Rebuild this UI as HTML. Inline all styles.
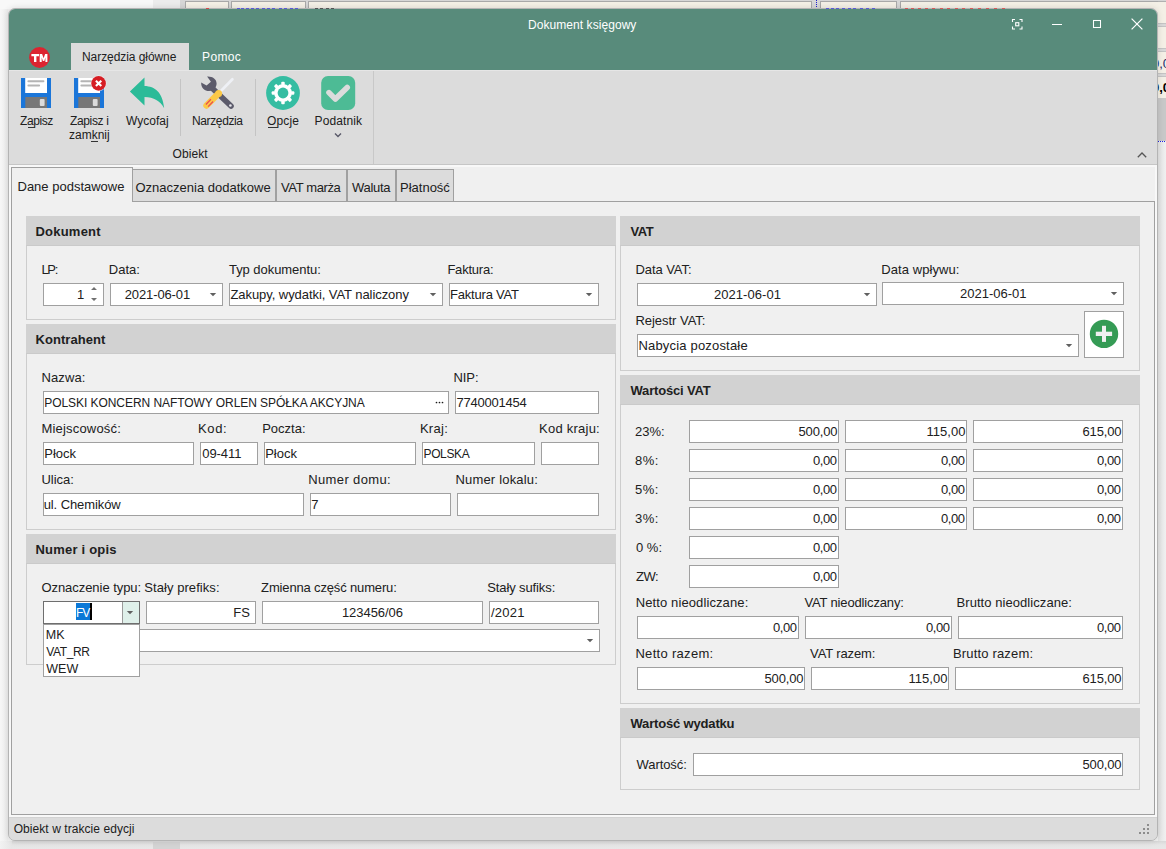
<!DOCTYPE html>
<html><head><meta charset="utf-8"><title>Dokument księgowy</title>
<style>
html,body{margin:0;padding:0;width:1166px;height:849px;overflow:hidden;background:#f0f0f0}
.b{position:absolute;box-sizing:border-box}
.t{position:absolute;font-family:"Liberation Sans", sans-serif;line-height:16px;white-space:nowrap;color:#202020}
</style></head><body>
<div class="b" style="left:0;top:0;width:1166px;height:849px;background:linear-gradient(90deg,#f7f7f7 0,#ececec 8px,#f0f0f0 8px)"></div>
<div class="b" style="left:0px;top:0px;width:153px;height:9px;background:#f8f8f8;"></div>
<div class="b" style="left:153px;top:0px;width:27px;height:9px;background:#ececec;"></div>
<div class="b" style="left:180px;top:0px;width:987px;height:9px;background:#d6d6d6;"></div>
<div class="b" style="left:185px;top:1px;width:44px;height:12px;background:#f4f0e6;border-left:1px solid #a8a8a8;border-top:1px solid #a8a8a8;border-right:1px solid #a8a8a8;"></div>
<div class="b" style="left:231px;top:1px;width:75px;height:12px;background:#f4f0e6;border-left:1px solid #a8a8a8;border-top:1px solid #a8a8a8;border-right:1px solid #a8a8a8;"></div>
<div class="b" style="left:308px;top:1px;width:504px;height:12px;background:#f4f0e6;border-left:1px solid #a8a8a8;border-top:1px solid #a8a8a8;border-right:1px solid #a8a8a8;"></div>
<div class="b" style="left:820px;top:1px;width:77px;height:12px;background:#f4f0e6;border-left:1px solid #a8a8a8;border-top:1px solid #a8a8a8;border-right:1px solid #a8a8a8;"></div>
<div class="b" style="left:900px;top:1px;width:271px;height:12px;background:#f4f0e6;border-left:1px solid #a8a8a8;border-top:1px solid #a8a8a8;border-right:1px solid #a8a8a8;"></div>
<div class="b" style="left:816px;top:0;width:1px;height:9px;border-left:1px dotted #2020d0"></div>
<div class="b" style="left:1158px;top:0px;width:9px;height:1px;background:#d6d6d6;"></div>
<div class="b" style="left:1158px;top:1px;width:9px;height:1px;background:#b0b0b0;"></div>
<div class="b" style="left:1158px;top:2px;width:9px;height:21px;background:#f4f0e6;"></div>
<div class="b" style="left:1158px;top:23px;width:9px;height:4px;background:#c4c4c4;"></div>
<div class="b" style="left:1158px;top:24px;width:9px;height:2px;background:#d8d8d8;"></div>
<div class="b" style="left:1158px;top:27px;width:9px;height:21px;background:#f4f0e6;"></div>
<div class="b" style="left:1158px;top:48px;width:9px;height:4px;background:#c4c4c4;"></div>
<div class="b" style="left:1158px;top:49px;width:9px;height:2px;background:#d8d8d8;"></div>
<div class="b" style="left:1158px;top:52px;width:9px;height:21px;background:#f4f0e6;"></div>
<div class="b" style="left:1158px;top:73px;width:9px;height:4px;background:#c4c4c4;"></div>
<div class="b" style="left:1158px;top:74px;width:9px;height:2px;background:#d8d8d8;"></div>
<div class="b" style="left:1158px;top:77px;width:9px;height:21px;background:#f4f0e6;"></div>
<div class="b" style="left:1158px;top:98px;width:9px;height:43px;background:#c8c8c8;"></div>
<div class="b" style="left:1158px;top:141px;width:9px;height:0;border-top:1px dotted #2020e0"></div>
<div class="b" style="left:1158px;top:142px;width:9px;height:707px;background:linear-gradient(90deg,#e2e2e2,#f2f2f2)"></div>
<div class="t" style="left:1152.00px;top:56px;font-size:13px;color:#1a2a6a;">0,0</div>
<div class="t" style="left:1152.00px;top:80px;font-size:13px;font-weight:bold;color:#000;">0,0</div>
<div class="b" style="left:0;top:841px;width:1166px;height:8px;background:linear-gradient(180deg,#d8d8d8,#e6e6e6 4px,#e8e8e8)"></div>
<div class="b" style="left:0;top:841px;width:12px;height:8px;background:linear-gradient(90deg,#f2f2f2,#e6e6e6)"></div>
<div class="b" style="left:153px;top:842px;width:27px;height:7px;background:#d4d4d4"></div>
<div class="b" style="left:8px;top:8px;width:1150px;height:833px;border:1px solid #b4b4b4;border-radius:7px;background:#dcdcdc;box-shadow:0 0 6px rgba(0,0,0,0.12)"></div>
<div class="b" style="left:206px;top:8px;width:3px;height:1px;background:#d84a4a;"></div>
<div class="b" style="left:237px;top:8px;width:3px;height:1px;background:#5a5ad8;"></div>
<div class="b" style="left:241px;top:8px;width:3px;height:1px;background:#5a5ad8;"></div>
<div class="b" style="left:246px;top:8px;width:3px;height:1px;background:#5a5ad8;"></div>
<div class="b" style="left:251px;top:8px;width:3px;height:1px;background:#5a5ad8;"></div>
<div class="b" style="left:256px;top:8px;width:3px;height:1px;background:#5a5ad8;"></div>
<div class="b" style="left:262px;top:8px;width:3px;height:1px;background:#5a5ad8;"></div>
<div class="b" style="left:267px;top:8px;width:3px;height:1px;background:#5a5ad8;"></div>
<div class="b" style="left:272px;top:8px;width:3px;height:1px;background:#5a5ad8;"></div>
<div class="b" style="left:279px;top:8px;width:3px;height:1px;background:#5a5ad8;"></div>
<div class="b" style="left:284px;top:8px;width:3px;height:1px;background:#5a5ad8;"></div>
<div class="b" style="left:290px;top:8px;width:3px;height:1px;background:#5a5ad8;"></div>
<div class="b" style="left:295px;top:8px;width:3px;height:1px;background:#5a5ad8;"></div>
<div class="b" style="left:315px;top:8px;width:3px;height:1px;background:#555555;"></div>
<div class="b" style="left:320px;top:8px;width:3px;height:1px;background:#555555;"></div>
<div class="b" style="left:326px;top:8px;width:3px;height:1px;background:#555555;"></div>
<div class="b" style="left:331px;top:8px;width:3px;height:1px;background:#555555;"></div>
<div class="b" style="left:826px;top:8px;width:3px;height:1px;background:#5a5ad8;"></div>
<div class="b" style="left:831px;top:8px;width:3px;height:1px;background:#5a5ad8;"></div>
<div class="b" style="left:836px;top:8px;width:3px;height:1px;background:#5a5ad8;"></div>
<div class="b" style="left:842px;top:8px;width:3px;height:1px;background:#5a5ad8;"></div>
<div class="b" style="left:848px;top:8px;width:3px;height:1px;background:#5a5ad8;"></div>
<div class="b" style="left:853px;top:8px;width:3px;height:1px;background:#5a5ad8;"></div>
<div class="b" style="left:860px;top:8px;width:3px;height:1px;background:#5a5ad8;"></div>
<div class="b" style="left:866px;top:8px;width:3px;height:1px;background:#5a5ad8;"></div>
<div class="b" style="left:872px;top:8px;width:3px;height:1px;background:#5a5ad8;"></div>
<div class="b" style="left:905px;top:8px;width:3px;height:1px;background:#d85a5a;"></div>
<div class="b" style="left:911px;top:8px;width:3px;height:1px;background:#d85a5a;"></div>
<div class="b" style="left:918px;top:8px;width:3px;height:1px;background:#d85a5a;"></div>
<div class="b" style="left:925px;top:8px;width:3px;height:1px;background:#d85a5a;"></div>
<div class="b" style="left:932px;top:8px;width:3px;height:1px;background:#d85a5a;"></div>
<div class="b" style="left:940px;top:8px;width:3px;height:1px;background:#d85a5a;"></div>
<div class="b" style="left:947px;top:8px;width:3px;height:1px;background:#d85a5a;"></div>
<div class="b" style="left:955px;top:8px;width:3px;height:1px;background:#d85a5a;"></div>
<div class="b" style="left:962px;top:8px;width:3px;height:1px;background:#d85a5a;"></div>
<div class="b" style="left:970px;top:8px;width:3px;height:1px;background:#d85a5a;"></div>
<div class="b" style="left:978px;top:8px;width:3px;height:1px;background:#d85a5a;"></div>
<div class="b" style="left:986px;top:8px;width:3px;height:1px;background:#d85a5a;"></div>
<div class="b" style="left:994px;top:8px;width:3px;height:1px;background:#d85a5a;"></div>
<div class="b" style="left:1002px;top:8px;width:3px;height:1px;background:#d85a5a;"></div>
<div class="b" style="left:9px;top:9px;width:1148px;height:61px;background:#588b7b;border-radius:6px 6px 0 0"></div>
<div class="t" style="left:528.00px;top:17px;font-size:12px;color:#ffffff;letter-spacing:0.062px;">Dokument księgowy</div>
<svg class="b" style="left:1011px;top:18px" width="12" height="12" viewBox="0 0 12 12"><path d="M1.5,4 V1.5 H4 M8.5,1.5 H11 V4 M11,8.5 V11 H8.5 M4,11 H1.5 V8.5" stroke="#fff" stroke-width="1.1" fill="none"/><rect x="4.7" y="4.7" width="3.1" height="3.1" stroke="#fff" stroke-width="1.1" fill="none"/></svg>
<div class="b" style="left:1052px;top:24px;width:10px;height:1px;background:#ffffff;"></div>
<svg class="b" style="left:1092px;top:19px" width="10" height="10" viewBox="0 0 10 10"><rect x="1.5" y="1.5" width="7" height="7" stroke="#fff" stroke-width="1.05" fill="none"/></svg>
<svg class="b" style="left:1130px;top:17px" width="14" height="14" viewBox="0 0 14 14"><path d="M1.6,1.6 L12.4,12.4 M12.4,1.6 L1.6,12.4" stroke="#fff" stroke-width="1.25"/></svg>
<svg class="b" style="left:29px;top:47px" width="22" height="22" viewBox="0 0 22 22"><circle cx="10.5" cy="10.5" r="10.4" fill="#dc2430"/><path d="M2.4,6.9 H10 V9.2 H7.4 V14.9 H5 V9.2 H2.4 Z" fill="#fff"/><path d="M10.7,6.9 H13.1 L14.6,11.2 L16.1,6.9 H18.4 V14.9 H16.4 V10.6 L15.3,14 H13.9 L12.7,10.6 V14.9 H10.7 Z" fill="#fff"/></svg>
<div class="b" style="left:71px;top:43px;width:118px;height:27px;background:#dcdcdc;"></div>
<div class="t" style="left:82.00px;top:49px;font-size:12px;letter-spacing:-0.067px;">Narzędzia główne</div>
<div class="t" style="left:202.00px;top:49px;font-size:12px;color:#ffffff;letter-spacing:0.375px;">Pomoc</div>
<div class="b" style="left:9px;top:70px;width:1148px;height:1px;background:#e6e6e6;"></div>
<div class="b" style="left:9px;top:71px;width:1148px;height:93px;background:#dcdcdc;"></div>
<div class="b" style="left:9px;top:164px;width:1148px;height:1px;background:#c6c6c6;"></div>
<div class="b" style="left:180px;top:79px;width:1px;height:57px;background:#c4c4c4;"></div>
<div class="b" style="left:255px;top:79px;width:1px;height:57px;background:#c4c4c4;"></div>
<div class="b" style="left:373px;top:71px;width:1px;height:93px;background:#c8c8c8;"></div>
<svg class="b" style="left:21px;top:78px" width="30" height="30" viewBox="0 0 30 30"><rect x="0" y="0" width="30" height="30" fill="#1b76d9"/><rect x="4.2" y="0" width="21.8" height="15" fill="#ffffff"/><rect x="6.4" y="2.3" width="17" height="1.9" rx="0.9" fill="#b5b5b5"/><rect x="6.4" y="6.6" width="12.7" height="2" rx="1" fill="#b5b5b5"/><rect x="4.3" y="19" width="21.7" height="11" fill="#777777"/><rect x="18.8" y="21.1" width="4.8" height="6.9" rx="1" fill="#dcdcdc"/></svg>
<svg class="b" style="left:74px;top:78px" width="30" height="30" viewBox="0 0 30 30"><rect x="0" y="0" width="30" height="30" fill="#1b76d9"/><rect x="4.2" y="0" width="21.8" height="15" fill="#ffffff"/><rect x="6.4" y="2.3" width="17" height="1.9" rx="0.9" fill="#b5b5b5"/><rect x="6.4" y="6.6" width="12.7" height="2" rx="1" fill="#b5b5b5"/><rect x="4.3" y="19" width="21.7" height="11" fill="#777777"/><rect x="18.8" y="21.1" width="4.8" height="6.9" rx="1" fill="#dcdcdc"/></svg>
<svg class="b" style="left:90px;top:75px" width="17" height="17" viewBox="0 0 17 17"><circle cx="8.6" cy="8.4" r="7.8" fill="#fff" opacity="0.6"/><circle cx="8.6" cy="8.4" r="7.3" fill="#d61d23"/><path d="M5.9,5.7 L11.3,11.1 M11.3,5.7 L5.9,11.1" stroke="#fff" stroke-width="2.1"/></svg>
<svg class="b" style="left:125px;top:74px" width="45" height="38" viewBox="0 0 45 38"><path d="M4.9,17.5 L19.5,3.4 L19.5,11.9 C30,12.2 37.5,18 39.2,34.2 C35,27 29,23.2 19.5,23.1 L19.5,31.6 Z" fill="#2bbb98"/></svg>
<svg class="b" style="left:196px;top:72px" width="44" height="42" viewBox="0 0 44 42"><path d="M16,16 L35,34" stroke="#5c5b6b" stroke-width="5.6" stroke-linecap="round"/><path d="M11.1,4.5 L14.9,9.7 L10.6,13.4 L5.2,10.4 C4.8,15.5 8.5,19 13.2,19 C17.5,19 20.6,15.5 20.6,11.5 C20.6,7 16.5,4.2 11.1,4.5 Z" fill="#5c5b6b"/><circle cx="34.4" cy="33.5" r="1.3" fill="#e8e8ee"/><path d="M36.4,7.2 L24.5,19.5" stroke="#eef0f5" stroke-width="2.7" stroke-linecap="round"/><path d="M20.5,23.5 L10.5,33.6" stroke="#fbc847" stroke-width="6.4" stroke-linecap="round"/><circle cx="22.6" cy="21.6" r="3.5" fill="#fbc847"/><path d="M14.9,27.2 L9.9,32.5 M17.1,29.5 L12.1,34.6" stroke="#ec5050" stroke-width="1.3"/></svg>
<svg class="b" style="left:266px;top:76px" width="34" height="34" viewBox="0 0 34 34"><circle cx="17" cy="17" r="16.9" fill="#35bda2"/><rect x="24.85" y="15.25" width="3.5" height="3.5" rx="1.1" fill="#fff" transform="rotate(0 26.60 17.00)"/><rect x="22.04" y="22.04" width="3.5" height="3.5" rx="1.1" fill="#fff" transform="rotate(45 23.79 23.79)"/><rect x="15.25" y="24.85" width="3.5" height="3.5" rx="1.1" fill="#fff" transform="rotate(90 17.00 26.60)"/><rect x="8.46" y="22.04" width="3.5" height="3.5" rx="1.1" fill="#fff" transform="rotate(135 10.21 23.79)"/><rect x="5.65" y="15.25" width="3.5" height="3.5" rx="1.1" fill="#fff" transform="rotate(180 7.40 17.00)"/><rect x="8.46" y="8.46" width="3.5" height="3.5" rx="1.1" fill="#fff" transform="rotate(225 10.21 10.21)"/><rect x="15.25" y="5.65" width="3.5" height="3.5" rx="1.1" fill="#fff" transform="rotate(270 17.00 7.40)"/><rect x="22.04" y="8.46" width="3.5" height="3.5" rx="1.1" fill="#fff" transform="rotate(315 23.79 10.21)"/><circle cx="17" cy="17" r="8.9" fill="#fff"/><circle cx="17" cy="17" r="5.4" fill="#35bda2"/></svg>
<svg class="b" style="left:321px;top:76px" width="35" height="34" viewBox="0 0 35 34"><rect x="0.2" y="0" width="34" height="34" rx="6.8" fill="#4dbb95"/><path d="M8,16.6 L14.4,23.1 L26.2,11.4" stroke="#dcdcdc" stroke-width="5.6" stroke-linecap="round" stroke-linejoin="round" fill="none"/></svg>
<svg class="b" style="left:333px;top:132px" width="10" height="6" viewBox="0 0 10 6"><path d="M2,1.6 L5,4.5 L8,1.6" stroke="#585868" stroke-width="1.4" fill="none"/></svg>
<div class="t" style="left:20.00px;top:113px;font-size:12px;letter-spacing:-0.400px;">Zapisz</div>
<div class="b" style="left:28px;top:127px;width:7px;height:1px;background:#333;"></div>
<div class="t" style="left:70.00px;top:113px;font-size:12px;letter-spacing:-0.357px;">Zapisz i</div>
<div class="t" style="left:69.00px;top:127px;font-size:12px;">zamknij</div>
<div class="b" style="left:91px;top:141px;width:7px;height:1px;background:#333;"></div>
<div class="t" style="left:126.00px;top:113px;font-size:12px;">Wycofaj</div>
<div class="t" style="left:192.00px;top:113px;font-size:12px;letter-spacing:-0.375px;">Narzędzia</div>
<div class="t" style="left:267.00px;top:113px;font-size:12px;letter-spacing:0.125px;">Opcje</div>
<div class="b" style="left:268px;top:127px;width:10px;height:1px;background:#333;"></div>
<div class="t" style="left:314.60px;top:113px;font-size:12px;letter-spacing:0.100px;">Podatnik</div>
<div class="t" style="left:172.50px;top:146px;font-size:12px;letter-spacing:0.100px;">Obiekt</div>
<svg class="b" style="left:1136px;top:150px" width="12" height="9" viewBox="0 0 12 9"><path d="M1.8,7.2 L6,3 L10.2,7.2" stroke="#555" stroke-width="1.3" fill="none"/></svg>
<div class="b" style="left:9px;top:165px;width:1148px;height:652px;background:#f0f0f0;"></div>
<div class="b" style="left:9px;top:165px;width:1148px;height:2px;background:#f8f8f8;"></div>
<div class="b" style="left:9px;top:165px;width:2px;height:652px;background:#f8f8f8;"></div>
<div class="b" style="left:1155px;top:165px;width:2px;height:652px;background:#f8f8f8;"></div>
<div class="b" style="left:9px;top:815px;width:1148px;height:2px;background:#f8f8f8;"></div>
<div class="b" style="left:11px;top:201px;width:1144px;height:614px;background:#f0f0f0;border:1px solid #a0a0a0;box-sizing:border-box;"></div>
<div class="b" style="left:132px;top:169px;width:144px;height:33px;background:#dcdcdc;border:1px solid #a0a0a0;box-sizing:border-box;"></div>
<div class="b" style="left:276px;top:169px;width:71px;height:33px;background:#dcdcdc;border:1px solid #a0a0a0;box-sizing:border-box;"></div>
<div class="b" style="left:347px;top:169px;width:49px;height:33px;background:#dcdcdc;border:1px solid #a0a0a0;box-sizing:border-box;"></div>
<div class="b" style="left:396px;top:169px;width:58px;height:33px;background:#dcdcdc;border:1px solid #a0a0a0;box-sizing:border-box;"></div>
<div class="b" style="left:11px;top:167px;width:122px;height:35px;background:#f0f0f0;border:1px solid #a0a0a0;border-bottom:none;box-sizing:border-box;"></div>
<div class="b" style="left:12px;top:201px;width:120px;height:2px;background:#f0f0f0;"></div>
<div class="t" style="left:17.50px;top:179px;font-size:13px;">Dane podstawowe</div>
<div class="t" style="left:135.50px;top:180px;font-size:13px;">Oznaczenia dodatkowe</div>
<div class="t" style="left:281.00px;top:180px;font-size:13px;letter-spacing:-0.375px;">VAT marża</div>
<div class="t" style="left:352.00px;top:180px;font-size:13px;letter-spacing:-0.300px;">Waluta</div>
<div class="t" style="left:400.00px;top:180px;font-size:13px;">Płatność</div>
<div class="b" style="left:26px;top:216px;width:590px;height:104px;background:#f0f0f0;border:1px solid #cdcdcd;box-sizing:border-box;"></div>
<div class="b" style="left:26px;top:216px;width:590px;height:30px;background:#d2d2d2;border-bottom:1px solid #cacaca;box-sizing:border-box;"></div>
<div class="t" style="left:35.50px;top:224px;font-size:13px;font-weight:bold;letter-spacing:0.214px;">Dokument</div>
<div class="b" style="left:26px;top:324px;width:590px;height:206px;background:#f0f0f0;border:1px solid #cdcdcd;box-sizing:border-box;"></div>
<div class="b" style="left:26px;top:324px;width:590px;height:30px;background:#d2d2d2;border-bottom:1px solid #cacaca;box-sizing:border-box;"></div>
<div class="t" style="left:35.50px;top:332px;font-size:13px;font-weight:bold;letter-spacing:0.067px;">Kontrahent</div>
<div class="b" style="left:26px;top:534px;width:590px;height:131px;background:#f0f0f0;border:1px solid #cdcdcd;box-sizing:border-box;"></div>
<div class="b" style="left:26px;top:534px;width:590px;height:30px;background:#d2d2d2;border-bottom:1px solid #cacaca;box-sizing:border-box;"></div>
<div class="t" style="left:35.50px;top:542px;font-size:13px;font-weight:bold;letter-spacing:0.209px;">Numer i opis</div>
<div class="b" style="left:620px;top:216px;width:520px;height:155px;background:#f0f0f0;border:1px solid #cdcdcd;box-sizing:border-box;"></div>
<div class="b" style="left:620px;top:216px;width:520px;height:30px;background:#d2d2d2;border-bottom:1px solid #cacaca;box-sizing:border-box;"></div>
<div class="t" style="left:630.50px;top:224px;font-size:13px;font-weight:bold;letter-spacing:-0.500px;">VAT</div>
<div class="b" style="left:620px;top:375px;width:520px;height:329px;background:#f0f0f0;border:1px solid #cdcdcd;box-sizing:border-box;"></div>
<div class="b" style="left:620px;top:375px;width:520px;height:30px;background:#d2d2d2;border-bottom:1px solid #cacaca;box-sizing:border-box;"></div>
<div class="t" style="left:630.50px;top:383px;font-size:13px;font-weight:bold;letter-spacing:-0.182px;">Wartości VAT</div>
<div class="b" style="left:620px;top:708px;width:520px;height:82px;background:#f0f0f0;border:1px solid #cdcdcd;box-sizing:border-box;"></div>
<div class="b" style="left:620px;top:708px;width:520px;height:30px;background:#d2d2d2;border-bottom:1px solid #cacaca;box-sizing:border-box;"></div>
<div class="t" style="left:630.50px;top:716px;font-size:13px;font-weight:bold;letter-spacing:-0.171px;">Wartość wydatku</div>
<div class="t" style="left:41.40px;top:262px;font-size:13px;letter-spacing:-1.250px;">LP:</div>
<div class="t" style="left:108.80px;top:262px;font-size:13px;">Data:</div>
<div class="t" style="left:229.00px;top:262px;font-size:13px;letter-spacing:-0.054px;">Typ dokumentu:</div>
<div class="t" style="left:447.40px;top:262px;font-size:13px;letter-spacing:-0.214px;">Faktura:</div>
<div class="b" style="left:43px;top:283px;width:61px;height:23px;background:#ffffff;border:1px solid #a0a0a0;box-sizing:border-box;"></div>
<div class="t" style="left:77.00px;top:287px;font-size:13px;">1</div>
<svg class="b" style="left:89px;top:285px" width="10" height="18" viewBox="0 0 10 18"><path d="M2,5 L5,2 L8,5 Z M2,13 L5,16 L8,13 Z" fill="#707070"/></svg>
<div class="b" style="left:110px;top:283px;width:113px;height:23px;background:#ffffff;border:1px solid #a0a0a0;box-sizing:border-box;"></div>
<div class="t" style="left:124.70px;top:287px;font-size:13px;letter-spacing:-0.111px;">2021-06-01</div>
<svg class="b" style="left:208.5px;top:292px" width="8" height="5" viewBox="0 0 8 5"><path d="M0.8,1 H7.2 L4,4.2 Z" fill="#606060"/></svg>
<div class="b" style="left:229px;top:283px;width:214px;height:23px;background:#ffffff;border:1px solid #a0a0a0;box-sizing:border-box;"></div>
<div class="t" style="left:230.50px;top:287px;font-size:13px;letter-spacing:-0.069px;">Zakupy, wydatki, VAT naliczony</div>
<svg class="b" style="left:428.6px;top:292px" width="8" height="5" viewBox="0 0 8 5"><path d="M0.8,1 H7.2 L4,4.2 Z" fill="#606060"/></svg>
<div class="b" style="left:449px;top:283px;width:150px;height:23px;background:#ffffff;border:1px solid #a0a0a0;box-sizing:border-box;"></div>
<div class="t" style="left:450.00px;top:287px;font-size:13px;letter-spacing:-0.200px;">Faktura VAT</div>
<svg class="b" style="left:584.6px;top:292px" width="8" height="5" viewBox="0 0 8 5"><path d="M0.8,1 H7.2 L4,4.2 Z" fill="#606060"/></svg>
<div class="t" style="left:41.40px;top:370px;font-size:13px;letter-spacing:0.140px;">Nazwa:</div>
<div class="t" style="left:453.50px;top:370px;font-size:13px;letter-spacing:-0.067px;">NIP:</div>
<div class="b" style="left:43px;top:391px;width:406px;height:23px;background:#ffffff;border:1px solid #a0a0a0;box-sizing:border-box;"></div>
<div class="t" style="left:44.30px;top:395px;font-size:12px;letter-spacing:-0.062px;">POLSKI KONCERN NAFTOWY ORLEN SPÓŁKA AKCYJNA</div>
<svg class="b" style="left:434px;top:400px" width="12" height="5" viewBox="0 0 12 5"><circle cx="2.5" cy="2.5" r="0.85" fill="#1a1a1a"/><circle cx="5.5" cy="2.5" r="0.85" fill="#1a1a1a"/><circle cx="8.5" cy="2.5" r="0.85" fill="#1a1a1a"/></svg>
<div class="b" style="left:455px;top:391px;width:144px;height:23px;background:#ffffff;border:1px solid #a0a0a0;box-sizing:border-box;"></div>
<div class="t" style="left:456.40px;top:395px;font-size:13px;letter-spacing:-0.222px;">7740001454</div>
<div class="t" style="left:41.40px;top:421px;font-size:13px;letter-spacing:0.200px;">Miejscowość:</div>
<div class="t" style="left:197.90px;top:421px;font-size:13px;letter-spacing:0.667px;">Kod:</div>
<div class="t" style="left:262.20px;top:421px;font-size:13px;">Poczta:</div>
<div class="t" style="left:419.90px;top:421px;font-size:13px;letter-spacing:0.300px;">Kraj:</div>
<div class="t" style="left:539.00px;top:421px;font-size:13px;letter-spacing:0.244px;">Kod kraju:</div>
<div class="b" style="left:43px;top:442px;width:151px;height:23px;background:#ffffff;border:1px solid #a0a0a0;box-sizing:border-box;"></div>
<div class="t" style="left:44.30px;top:446px;font-size:13px;">Płock</div>
<div class="b" style="left:200px;top:442px;width:58px;height:23px;background:#ffffff;border:1px solid #a0a0a0;box-sizing:border-box;"></div>
<div class="t" style="left:202.20px;top:446px;font-size:13px;letter-spacing:-0.040px;">09-411</div>
<div class="b" style="left:264px;top:442px;width:152px;height:23px;background:#ffffff;border:1px solid #a0a0a0;box-sizing:border-box;"></div>
<div class="t" style="left:265.20px;top:446px;font-size:13px;">Płock</div>
<div class="b" style="left:422px;top:442px;width:113px;height:23px;background:#ffffff;border:1px solid #a0a0a0;box-sizing:border-box;"></div>
<div class="t" style="left:423.50px;top:446px;font-size:12px;letter-spacing:-0.360px;">POLSKA</div>
<div class="b" style="left:541px;top:442px;width:58px;height:23px;background:#ffffff;border:1px solid #a0a0a0;box-sizing:border-box;"></div>
<div class="t" style="left:41.40px;top:472px;font-size:13px;letter-spacing:-0.020px;">Ulica:</div>
<div class="t" style="left:308.20px;top:472px;font-size:13px;letter-spacing:0.380px;">Numer domu:</div>
<div class="t" style="left:455.40px;top:472px;font-size:13px;letter-spacing:0.192px;">Numer lokalu:</div>
<div class="b" style="left:43px;top:493px;width:261px;height:23px;background:#ffffff;border:1px solid #a0a0a0;box-sizing:border-box;"></div>
<div class="t" style="left:43.70px;top:497px;font-size:13px;letter-spacing:-0.091px;">ul. Chemików</div>
<div class="b" style="left:310px;top:493px;width:141px;height:23px;background:#ffffff;border:1px solid #a0a0a0;box-sizing:border-box;"></div>
<div class="t" style="left:311.20px;top:497px;font-size:13px;">7</div>
<div class="b" style="left:457px;top:493px;width:142px;height:23px;background:#ffffff;border:1px solid #a0a0a0;box-sizing:border-box;"></div>
<div class="t" style="left:41.40px;top:580px;font-size:13px;letter-spacing:-0.047px;">Oznaczenie typu:</div>
<div class="t" style="left:144.30px;top:580px;font-size:13px;letter-spacing:0.062px;">Stały prefiks:</div>
<div class="t" style="left:261.10px;top:580px;font-size:13px;letter-spacing:-0.150px;">Zmienna część numeru:</div>
<div class="t" style="left:487.30px;top:580px;font-size:13px;letter-spacing:-0.117px;">Stały sufiks:</div>
<div class="b" style="left:146px;top:601px;width:110px;height:23px;background:#ffffff;border:1px solid #a0a0a0;box-sizing:border-box;"></div>
<div class="t" style="left:233.20px;top:605px;font-size:13px;">FS</div>
<div class="b" style="left:262px;top:601px;width:221px;height:23px;background:#ffffff;border:1px solid #a0a0a0;box-sizing:border-box;"></div>
<div class="t" style="left:341.90px;top:605px;font-size:13px;letter-spacing:-0.037px;">123456/06</div>
<div class="b" style="left:489px;top:601px;width:110px;height:23px;background:#ffffff;border:1px solid #a0a0a0;box-sizing:border-box;"></div>
<div class="t" style="left:491.00px;top:605px;font-size:13px;letter-spacing:0.250px;">/2021</div>
<div class="b" style="left:43px;top:629px;width:557px;height:23px;background:#ffffff;border:1px solid #a0a0a0;box-sizing:border-box;"></div>
<svg class="b" style="left:585.5px;top:638px" width="8" height="5" viewBox="0 0 8 5"><path d="M0.8,1 H7.2 L4,4.2 Z" fill="#606060"/></svg>
<div class="b" style="left:43px;top:601px;width:97px;height:23px;background:#ffffff;border:1px solid #6e6e6e;box-sizing:border-box;"></div>
<div class="b" style="left:122px;top:602px;width:17px;height:21px;background:#dff0ea;border-left:1px solid #9a9a9a;box-sizing:border-box;"></div>
<svg class="b" style="left:126px;top:610px" width="8" height="5" viewBox="0 0 8 5"><path d="M0.8,1 H7.2 L4,4.2 Z" fill="#606060"/></svg>
<div class="b" style="left:76px;top:603px;width:15px;height:17px;background:#0a78d7;"></div>
<div class="b" style="left:90px;top:603px;width:2px;height:17px;background:#000000;"></div>
<div class="t" style="left:76.00px;top:605px;font-size:12px;color:#ffffff;letter-spacing:-1.000px;">FV</div>
<div class="b" style="left:43px;top:624px;width:97px;height:53px;background:#ffffff;border:1px solid #a0a0a0;box-sizing:border-box;"></div>
<div class="t" style="left:45.80px;top:627px;font-size:12.5px;">MK</div>
<div class="t" style="left:46.30px;top:644px;font-size:12px;letter-spacing:-0.400px;">VAT_RR</div>
<div class="t" style="left:46.30px;top:660.5px;font-size:12.5px;">WEW</div>
<div class="t" style="left:635.40px;top:262px;font-size:13px;letter-spacing:-0.050px;">Data VAT:</div>
<div class="t" style="left:881.20px;top:262px;font-size:13px;letter-spacing:0.082px;">Data wpływu:</div>
<div class="b" style="left:637px;top:283px;width:240px;height:23px;background:#ffffff;border:1px solid #a0a0a0;box-sizing:border-box;"></div>
<div class="t" style="left:714.00px;top:287px;font-size:13px;letter-spacing:0.044px;">2021-06-01</div>
<svg class="b" style="left:862.7px;top:292px" width="8" height="5" viewBox="0 0 8 5"><path d="M0.8,1 H7.2 L4,4.2 Z" fill="#606060"/></svg>
<div class="b" style="left:882px;top:282px;width:242px;height:23px;background:#ffffff;border:1px solid #a0a0a0;box-sizing:border-box;"></div>
<div class="t" style="left:960.00px;top:286px;font-size:13px;">2021-06-01</div>
<svg class="b" style="left:1109.8px;top:291px" width="8" height="5" viewBox="0 0 8 5"><path d="M0.8,1 H7.2 L4,4.2 Z" fill="#606060"/></svg>
<div class="t" style="left:635.40px;top:313px;font-size:13px;letter-spacing:-0.027px;">Rejestr VAT:</div>
<div class="b" style="left:637px;top:334px;width:442px;height:23px;background:#ffffff;border:1px solid #a0a0a0;box-sizing:border-box;"></div>
<div class="t" style="left:638.40px;top:338px;font-size:13px;letter-spacing:0.188px;">Nabycia pozostałe</div>
<svg class="b" style="left:1064.8px;top:343px" width="8" height="5" viewBox="0 0 8 5"><path d="M0.8,1 H7.2 L4,4.2 Z" fill="#606060"/></svg>
<div class="b" style="left:1084px;top:311px;width:40px;height:47px;background:#ffffff;border:1px solid #a0a0a0;box-sizing:border-box;"></div>
<svg class="b" style="left:1089px;top:319px" width="30" height="30" viewBox="0 0 30 30"><circle cx="15" cy="14.9" r="14.2" fill="#359b55"/><rect x="13" y="6.8" width="4" height="16.1" fill="#f0f0f0"/><rect x="6.8" y="12.7" width="16.3" height="4.3" fill="#f0f0f0"/></svg>
<div class="t" style="left:635.00px;top:424px;font-size:13px;">23%:</div>
<div class="b" style="left:689px;top:420px;width:150px;height:23px;background:#ffffff;border:1px solid #a0a0a0;box-sizing:border-box;"></div>
<div class="t" style="left:798.50px;top:424px;font-size:13px;letter-spacing:-0.160px;">500,00</div>
<div class="b" style="left:845px;top:420px;width:122px;height:23px;background:#ffffff;border:1px solid #a0a0a0;box-sizing:border-box;"></div>
<div class="t" style="left:926.50px;top:424px;font-size:13px;letter-spacing:0.040px;">115,00</div>
<div class="b" style="left:973px;top:420px;width:150px;height:23px;background:#ffffff;border:1px solid #a0a0a0;box-sizing:border-box;"></div>
<div class="t" style="left:1082.50px;top:424px;font-size:13px;letter-spacing:-0.160px;">615,00</div>
<div class="t" style="left:635.00px;top:453px;font-size:13px;letter-spacing:0.500px;">8%:</div>
<div class="b" style="left:689px;top:449px;width:150px;height:23px;background:#ffffff;border:1px solid #a0a0a0;box-sizing:border-box;"></div>
<div class="t" style="left:813.10px;top:453px;font-size:13px;letter-spacing:-0.467px;">0,00</div>
<div class="b" style="left:845px;top:449px;width:122px;height:23px;background:#ffffff;border:1px solid #a0a0a0;box-sizing:border-box;"></div>
<div class="t" style="left:941.10px;top:453px;font-size:13px;letter-spacing:-0.467px;">0,00</div>
<div class="b" style="left:973px;top:449px;width:150px;height:23px;background:#ffffff;border:1px solid #a0a0a0;box-sizing:border-box;"></div>
<div class="t" style="left:1097.10px;top:453px;font-size:13px;letter-spacing:-0.467px;">0,00</div>
<div class="t" style="left:635.00px;top:482px;font-size:13px;letter-spacing:0.500px;">5%:</div>
<div class="b" style="left:689px;top:478px;width:150px;height:23px;background:#ffffff;border:1px solid #a0a0a0;box-sizing:border-box;"></div>
<div class="t" style="left:813.10px;top:482px;font-size:13px;letter-spacing:-0.467px;">0,00</div>
<div class="b" style="left:845px;top:478px;width:122px;height:23px;background:#ffffff;border:1px solid #a0a0a0;box-sizing:border-box;"></div>
<div class="t" style="left:941.10px;top:482px;font-size:13px;letter-spacing:-0.467px;">0,00</div>
<div class="b" style="left:973px;top:478px;width:150px;height:23px;background:#ffffff;border:1px solid #a0a0a0;box-sizing:border-box;"></div>
<div class="t" style="left:1097.10px;top:482px;font-size:13px;letter-spacing:-0.467px;">0,00</div>
<div class="t" style="left:635.00px;top:511px;font-size:13px;letter-spacing:0.500px;">3%:</div>
<div class="b" style="left:689px;top:507px;width:150px;height:23px;background:#ffffff;border:1px solid #a0a0a0;box-sizing:border-box;"></div>
<div class="t" style="left:813.10px;top:511px;font-size:13px;letter-spacing:-0.467px;">0,00</div>
<div class="b" style="left:845px;top:507px;width:122px;height:23px;background:#ffffff;border:1px solid #a0a0a0;box-sizing:border-box;"></div>
<div class="t" style="left:941.10px;top:511px;font-size:13px;letter-spacing:-0.467px;">0,00</div>
<div class="b" style="left:973px;top:507px;width:150px;height:23px;background:#ffffff;border:1px solid #a0a0a0;box-sizing:border-box;"></div>
<div class="t" style="left:1097.10px;top:511px;font-size:13px;letter-spacing:-0.467px;">0,00</div>
<div class="t" style="left:636.00px;top:540px;font-size:13px;">0 %:</div>
<div class="b" style="left:689px;top:536px;width:150px;height:23px;background:#ffffff;border:1px solid #a0a0a0;box-sizing:border-box;"></div>
<div class="t" style="left:813.10px;top:540px;font-size:13px;letter-spacing:-0.467px;">0,00</div>
<div class="t" style="left:636.00px;top:569px;font-size:13px;letter-spacing:-0.500px;">ZW:</div>
<div class="b" style="left:689px;top:565px;width:150px;height:23px;background:#ffffff;border:1px solid #a0a0a0;box-sizing:border-box;"></div>
<div class="t" style="left:813.10px;top:569px;font-size:13px;letter-spacing:-0.467px;">0,00</div>
<div class="t" style="left:635.70px;top:595px;font-size:13px;letter-spacing:0.111px;">Netto nieodliczane:</div>
<div class="t" style="left:804.40px;top:595px;font-size:13px;letter-spacing:-0.150px;">VAT nieodliczany:</div>
<div class="t" style="left:956.50px;top:595px;font-size:13px;letter-spacing:0.063px;">Brutto nieodliczane:</div>
<div class="b" style="left:637px;top:616px;width:162px;height:23px;background:#ffffff;border:1px solid #a0a0a0;box-sizing:border-box;"></div>
<div class="t" style="left:773.10px;top:620px;font-size:13px;letter-spacing:-0.467px;">0,00</div>
<div class="b" style="left:805px;top:616px;width:147px;height:23px;background:#ffffff;border:1px solid #a0a0a0;box-sizing:border-box;"></div>
<div class="t" style="left:926.10px;top:620px;font-size:13px;letter-spacing:-0.467px;">0,00</div>
<div class="b" style="left:958px;top:616px;width:165px;height:23px;background:#ffffff;border:1px solid #a0a0a0;box-sizing:border-box;"></div>
<div class="t" style="left:1097.10px;top:620px;font-size:13px;letter-spacing:-0.467px;">0,00</div>
<div class="t" style="left:635.40px;top:646px;font-size:13px;letter-spacing:0.309px;">Netto razem:</div>
<div class="t" style="left:810.10px;top:646px;font-size:13px;letter-spacing:-0.133px;">VAT razem:</div>
<div class="t" style="left:953.00px;top:646px;font-size:13px;letter-spacing:0.167px;">Brutto razem:</div>
<div class="b" style="left:637px;top:667px;width:168px;height:23px;background:#ffffff;border:1px solid #a0a0a0;box-sizing:border-box;"></div>
<div class="t" style="left:764.50px;top:671px;font-size:13px;letter-spacing:-0.160px;">500,00</div>
<div class="b" style="left:811px;top:667px;width:138px;height:23px;background:#ffffff;border:1px solid #a0a0a0;box-sizing:border-box;"></div>
<div class="t" style="left:908.50px;top:671px;font-size:13px;letter-spacing:0.040px;">115,00</div>
<div class="b" style="left:955px;top:667px;width:168px;height:23px;background:#ffffff;border:1px solid #a0a0a0;box-sizing:border-box;"></div>
<div class="t" style="left:1082.50px;top:671px;font-size:13px;letter-spacing:-0.160px;">615,00</div>
<div class="t" style="left:636.60px;top:757px;font-size:13px;letter-spacing:-0.086px;">Wartość:</div>
<div class="b" style="left:693px;top:753px;width:430px;height:23px;background:#ffffff;border:1px solid #a0a0a0;box-sizing:border-box;"></div>
<div class="t" style="left:1082.50px;top:757px;font-size:13px;letter-spacing:-0.160px;">500,00</div>
<div class="b" style="left:9px;top:817px;width:1148px;height:23px;background:#dcdcdc;border-top:1px solid #d2d2d2;border-radius:0 0 6px 6px;box-sizing:border-box"></div>
<div class="t" style="left:13.70px;top:821px;font-size:12px;letter-spacing:0.064px;">Obiekt w trakcie edycji</div>
<div class="b" style="left:1147px;top:824px;width:2px;height:2px;background:#8c8c8c;"></div>
<div class="b" style="left:1143px;top:828px;width:2px;height:2px;background:#8c8c8c;"></div>
<div class="b" style="left:1147px;top:828px;width:2px;height:2px;background:#8c8c8c;"></div>
<div class="b" style="left:1139px;top:832px;width:2px;height:2px;background:#8c8c8c;"></div>
<div class="b" style="left:1143px;top:832px;width:2px;height:2px;background:#8c8c8c;"></div>
<div class="b" style="left:1147px;top:832px;width:2px;height:2px;background:#8c8c8c;"></div>
</body></html>
